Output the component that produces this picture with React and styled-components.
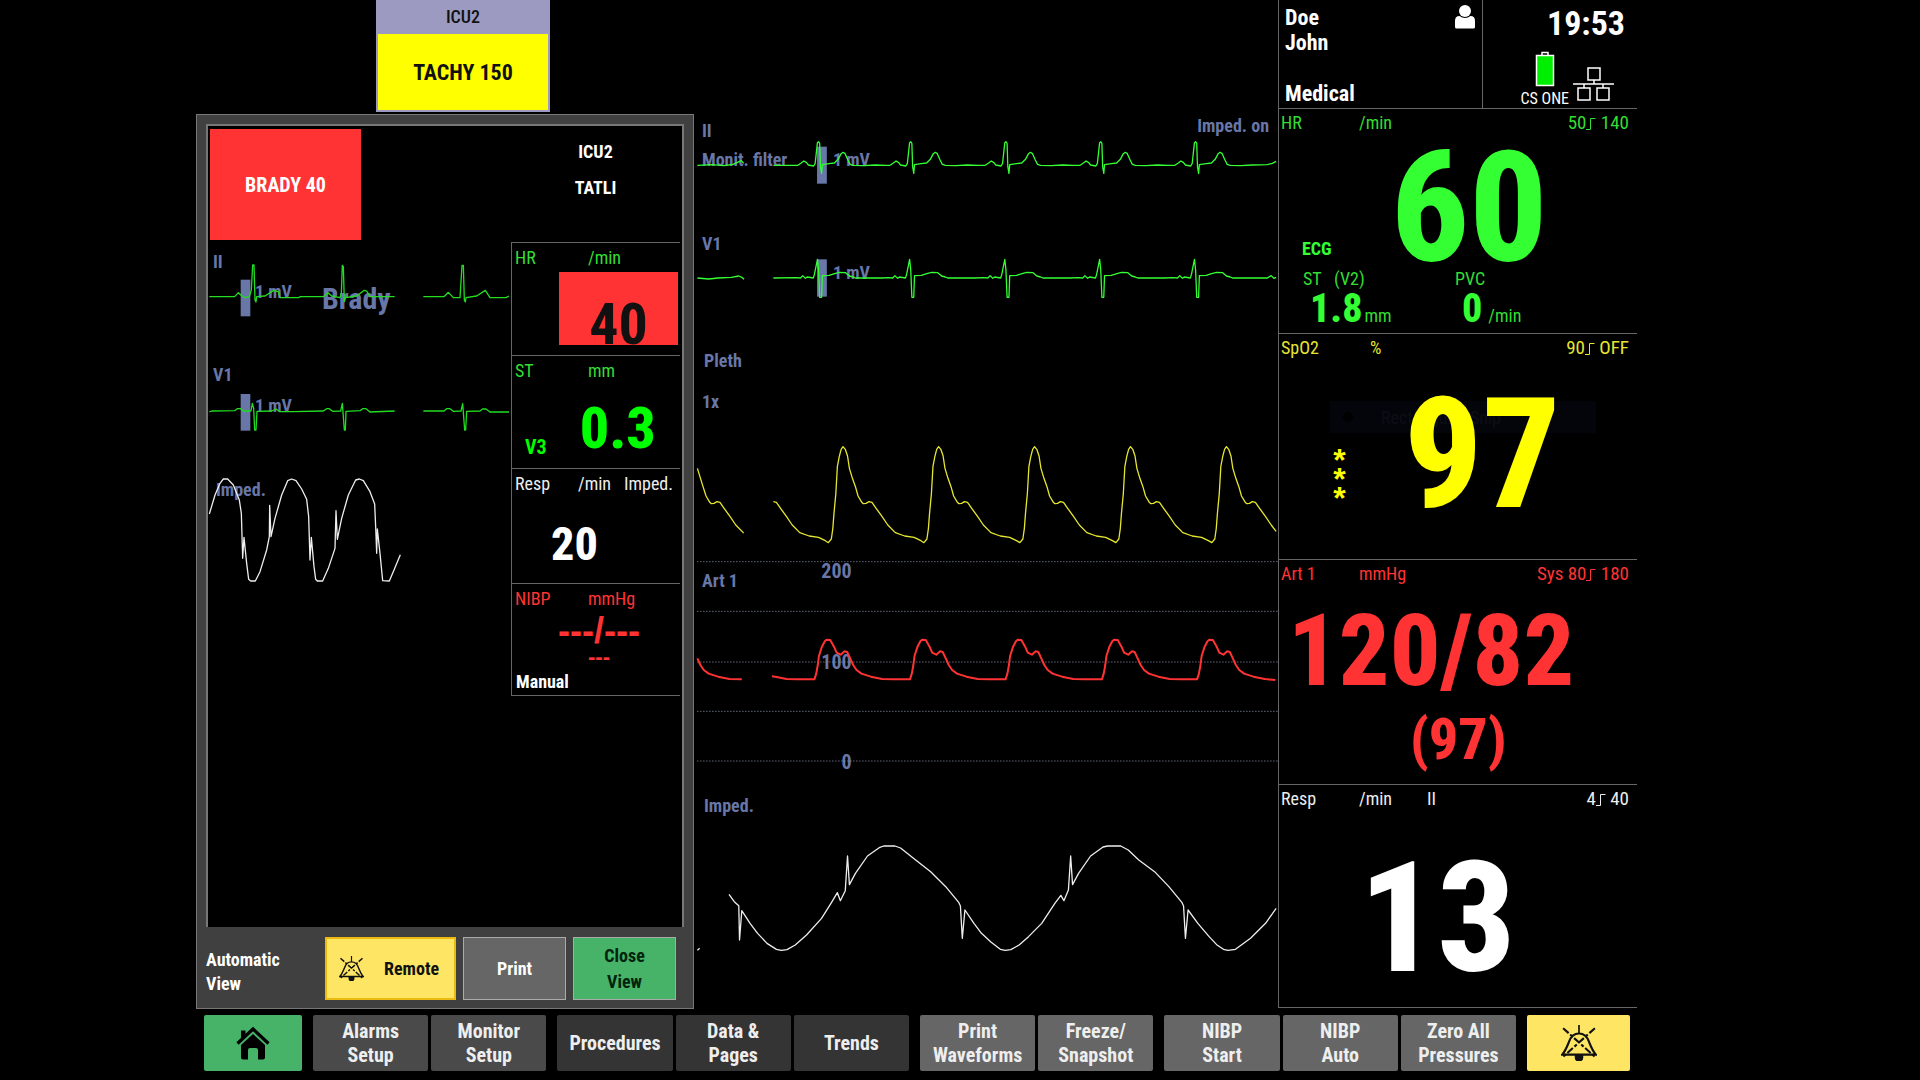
import styled, { createGlobalStyle } from "styled-components";

const narrow = `"Roboto Condensed", Roboto, sans-serif`;
const wide = `"Liberation Sans", sans-serif`;

const green = "#33ff33";
const dimGreen = "#33dd33";
const red = "#ff3333";
const yellow = "#ffff00";
const slate = "#6877a8";

// repeats one beat (offsets from its peak) and keeps what lies between from and to
function repeat(peaks, shape, from, to) {
  return peaks
    .flatMap((peak) => shape.map(([dx, y]) => [peak + dx, y]))
    .filter(([x]) => x >= from && x <= to)
    .join(" ");
}

const ecgBeat = [
  [-55, 196], [-47, 190], [-39, 183], [-32, 188], [-27, 195], [-13, 198], [-9, 190],
  [-3, 128], [0, 125], [3, 130], [5, 200], [8, 220], [10, 194], [28, 191], [42, 189],
  [52, 178], [60, 161], [65, 157], [70, 160], [78, 180], [84, 193], [92, 196], [120, 197], [150, 195], [180, 196],
];
const v1Beat = [
  [-60, 533], [-48, 534], [-42, 527], [-35, 535], [-30, 531], [-14, 534], [-11, 523],
  [-9, 512], [-3, 478], [0, 510], [3, 592], [8, 592], [10, 527], [28, 526], [45, 520],
  [56, 517], [72, 518], [82, 528], [92, 531], [98, 534], [170, 534],
];
const plethBeat = [
  [-39, 608], [-31, 597], [-27, 565], [-24, 520], [-19, 460], [-15, 380], [-10, 350],
  [-5, 328], [0, 320], [6, 328], [12, 348], [17, 385], [25, 415], [33, 440], [40, 468],
  [50, 487], [54, 491], [61, 490], [69, 485], [77, 487], [88, 505], [104, 530],
  [119, 555], [139, 578], [164, 588], [189, 592], [207, 602],
];
const artBeat = [
  [-36, 388], [-31, 370], [-27, 345], [-24, 318], [-16, 290], [-8, 273], [-3, 269],
  [6, 270], [16, 290], [23, 308], [34, 314], [44, 304], [51, 306], [59, 325],
  [67, 345], [76, 360], [89, 371], [114, 380], [144, 387], [175, 388], [210, 388],
];

const tracesII = [
  "20,196 60,194 90,197 115,193 137,182 143,190",
  `222,196 ${repeat([342, 587, 840, 1092, 1344], ecgBeat, 222, 1500)} 1535,194 1548,190 1558,184`,
];
const tracesV1 = [
  "20,534 50,537 75,534 110,532 130,528 138,532 144,538",
  `222,534 ${repeat([342, 587, 840, 1092, 1344], v1Beat, 222, 1515)} 1535,534 1545,527 1552,535 1558,532`,
];
const plethPeaks = [407, 661, 916, 1171, 1426];
const tracesPleth = [
  `20,385 35,440 ${repeat([3], plethBeat, 42, 142)} 142,580`,
  `${repeat([153, ...plethPeaks], plethBeat, 222, 1546)} 1558,574`,
];
const tracesArt = [
  `${repeat([-39], artBeat, 20, 110)} 138,388`,
  `218,379 ${repeat([113, 367, 621, 875, 1131, 1384], artBeat, 220, 1528)} 1556,390`,
];
const tracesImped = [
  "20,511 26,505",
  "104,343 118,365 130,377 132,480 138,392 160,430 180,460 205,490 230,508 243,511 258,509 280,495 310,465 350,415 375,370 392,338 400,362 413,332 419,228 424,314 440,280 472,228 505,202 515,198 545,198 560,204 600,240 640,275 680,320 715,368 719,378 724,475 731,390 755,430 775,460 800,486 825,508 838,511 853,509 875,495 900,470 935,430 970,370 986,346 994,362 1006,330 1012,228 1017,314 1033,280 1065,228 1098,201 1110,198 1145,198 1165,210 1193,240 1235,275 1273,320 1308,368 1312,378 1317,475 1324,390 1350,430 1380,470 1400,494 1418,508 1430,511 1450,508 1490,475 1530,430 1558,385",
];

const remoteII = [
  "58,890 134,890 145,878 156,888 165,893 178,890 184,870 188,795 192,795 195,900 198,906 200,890 225,888 250,872 265,875 270,893 325,893 332,890 400,890 414,878 425,888 450,893 454,880 457,796 460,800 463,905 467,893 500,888 523,871 530,873 540,890 614,890",
  "700,890 762,890 775,877 790,893 810,893 816,796 820,796 823,900 826,906 828,893 860,888 886,871 900,893 948,893 957,888",
];
const remoteV1 = [
  "58,216 65,213 134,212 142,206 152,206 160,213 183,213 187,190 191,205 194,270 198,270 201,214 245,213 258,207 270,215 310,215 400,213 410,206 418,206 428,214 452,213 457,190 463,270 466,270 468,214 510,212 518,206 528,206 540,216 614,213",
  "700,213 762,213 770,206 780,206 790,214 813,213 818,191 824,270 827,270 830,214 870,213 878,207 888,207 900,216 957,216",
];
const remoteImped = [
  "58,522 75,465 90,430 100,417 113,417 130,435 148,480 154,520 158,655 162,592 170,670 176,718 182,723 196,723 210,695 230,630 238,590 239,496 243,590 255,535 275,465 293,422 305,417 318,422 335,447 350,478 356,530 360,660 364,592 372,680 377,718 382,723 398,723 415,685 435,625 438,512 442,598 455,535 475,465 497,420 508,417 520,422 540,455 554,492 557,560 560,640 562,567 570,640 578,722 598,723 612,690 631,644",
];

function Wave({ box, lines, color, weight = 1.3, bar, rules = [] }) {
  return (
    <WaveSvg viewBox={box} preserveAspectRatio="none" aria-hidden="true">
      {bar && <rect x={bar[0]} y={bar[1]} width={bar[2]} height={bar[3]} fill={slate} />}
      {rules.map((y) => (
        <path key={y} d={`M20 ${y}H1562`} stroke="#8f9ab8" strokeWidth="1" strokeDasharray="1 2" />
      ))}
      {lines.map((points) => (
        <polyline key={points} points={points} stroke={color} strokeWidth={weight} />
      ))}
    </WaveSvg>
  );
}

function Step() {
  return (
    <svg width="10" height="14" viewBox="0 0 10 14" fill="none" stroke="currentColor" aria-hidden="true">
      <path d="M0 12.5H4.5V1.5H9.5" />
    </svg>
  );
}

function AlarmOff({ size }) {
  return (
    <svg width={size} height={size} viewBox="0 0 34 34" fill="none" stroke="#111" strokeWidth="2" aria-hidden="true">
      <path d="M17 0V8" strokeWidth="1.6" />
      <path d="M1 28H33C30 25 28.5 21 26.5 16C24.8 11 22 8 17 8S9.200 11 7.500 16C5.500 21 4 25 1 28Z" />
      <path d="M2 3L32 30M32 3L2 30" strokeDasharray="7 2 3 2" />
      <path d="M13 28H21V31A4 3.5 0 0 1 13 31Z" fill="#111" stroke="none" />
    </svg>
  );
}

function Home() {
  return (
    <svg width="34" height="34" viewBox="0 0 34 34" aria-hidden="true">
      <path d="M1.5 17.5L17 3L32.5 17.5" fill="none" stroke="#000" strokeWidth="3.2" />
      <path d="M5 4.5H9.5V9L5 13Z" />
      <path d="M17 8L29 19V31.5Q29 33.5 27 33.5H22V24Q22 22 20 22H14Q12 22 12 24V33.5H7Q5 33.5 5 31.5V19Z" />
    </svg>
  );
}

function Person() {
  return (
    <svg width="20" height="24" viewBox="0 0 20 24" fill="#fff" aria-hidden="true">
      <circle cx="10" cy="6" r="6" />
      <path d="M0 22V16Q0 11 4.5 11Q10 15 15.5 11Q20 11 20 16V22Q20 23.5 18.5 23.5H1.5Q0 23.5 0 22Z" />
    </svg>
  );
}

function Battery() {
  return (
    <svg width="20" height="36" viewBox="0 0 20 36" fill="none" stroke="#fff" aria-hidden="true">
      <path d="M7 4V1.5H13V4" strokeWidth="1.5" />
      <rect x="1.5" y="4.5" width="17" height="30" fill="#00ee00" strokeWidth="1.5" />
    </svg>
  );
}

function Network() {
  return (
    <svg width="42" height="34" viewBox="0 0 42 34" fill="none" stroke="#fff" strokeWidth="1.5" aria-hidden="true">
      <path d="M15 1H27V13H15ZM5 21H17V33H5ZM24 21H36V33H24ZM21 13V17M0 17H41M11 17V21M30 17V21" />
    </svg>
  );
}

function LimitHead({ name, unit, extra, low, high, color, inset }) {
  return (
    <ParamHead $color={color}>
      <span>{name}</span>
      <Unit $inset={inset}>{unit}</Unit>
      <span>{extra}</span>
      <Limits>
        {low}
        <Step /> {high}
      </Limits>
    </ParamHead>
  );
}

export default function App() {
  return (
    <>
      <GlobalStyle />
      <Page>
        <Main>
          <RemoteColumn>
            <BedTab>
              <BedName>ICU2</BedName>
              <BedAlarm>TACHY 150</BedAlarm>
            </BedTab>
            <Panel>
              <Screen>
                <ScreenHead>
                  <Brady>BRADY 40</Brady>
                  <Bed>
                    <span>ICU2</span>
                    <span>TATLI</span>
                  </Bed>
                </ScreenHead>
                <ScreenBody>
                  <RemoteWaves>
                    <Channel>
                      <Tag $x={5} $y={20}>II</Tag>
                      <Tag $x={47} $y={50}>1 mV</Tag>
                      <Tag $x={114} $y={57} $size={30}>Brady</Tag>
                      <Wave box="54 726 909 339" bar={[152, 839, 29, 110]} lines={remoteII} color="#22dd22" />
                    </Channel>
                    <Channel>
                      <Tag $x={5} $y={20}>V1</Tag>
                      <Tag $x={47} $y={51}>1 mV</Tag>
                      <Wave box="54 45 909 339" bar={[152, 162, 29, 110]} lines={remoteV1} color="#22dd22" />
                    </Channel>
                    <Channel>
                      <Tag $x={8} $y={22}>Imped.</Tag>
                      <Wave box="54 384 909 345" lines={remoteImped} color="#eee" />
                    </Channel>
                  </RemoteWaves>
                  <Vitals>
                    <Vital>
                      <VitalHead $color={dimGreen}>
                        <span>HR</span>
                        <span>/min</span>
                      </VitalHead>
                      <RedBox>40</RedBox>
                    </Vital>
                    <Vital>
                      <VitalHead $color={dimGreen}>
                        <span>ST</span>
                        <span>mm</span>
                      </VitalHead>
                      <StRow>
                        <Lead>V3</Lead>
                        <Value $size={58}>0.3</Value>
                      </StRow>
                    </Vital>
                    <Vital>
                      <VitalHead $color="#eee" $unitAt={63}>
                        <span>Resp</span>
                        <span>/min</span>
                        <span>Imped.</span>
                      </VitalHead>
                      <RespValue $size={46}>20</RespValue>
                    </Vital>
                    <Vital>
                      <VitalHead $color={red}>
                        <span>NIBP</span>
                        <span>mmHg</span>
                      </VitalHead>
                      <Pressure>
                        <Dashes $size={36}>---/---</Dashes>
                        <Dashes $size={22}>---</Dashes>
                      </Pressure>
                      <Manual>Manual</Manual>
                    </Vital>
                  </Vitals>
                </ScreenBody>
              </Screen>
              <PanelFoot>
                <ViewName>
                  Automatic
                  <br />
                  View
                </ViewName>
                <RemoteButton type="button">
                  <AlarmOff size={25} />
                  Remote
                </RemoteButton>
                <PanelButton type="button">Print</PanelButton>
                <CloseButton type="button">
                  Close
                  <br />
                  View
                </CloseButton>
              </PanelFoot>
            </Panel>
          </RemoteColumn>

          <Waves>
            <Channel>
              <Tag $x={8} $y={19}>II</Tag>
              <Tag $x={8} $y={48}>Monit. filter</Tag>
              <Tag $x={139} $y={48}>1 mV</Tag>
              <RightTag>Imped. on</RightTag>
              <Wave box="11 36 1552 339" bar={[338, 140, 26, 111]} lines={tracesII} color={green} />
            </Channel>
            <Channel>
              <Tag $x={8} $y={19}>V1</Tag>
              <Tag $x={139} $y={48}>1 mV</Tag>
              <Wave box="11 375 1552 339" bar={[338, 478, 26, 112]} lines={tracesV1} color={green} />
            </Channel>
            <Channel>
              <Tag $x={10} $y={23}>Pleth</Tag>
              <Tag $x={8} $y={64}>1x</Tag>
              <Wave box="11 -6 1552 663" lines={tracesPleth} color="#e6e632" />
            </Channel>
            <Channel>
              <Tag $x={8} $y={22}>Art 1</Tag>
              <Scale $y={12}>200</Scale>
              <Scale $y={103}>100</Scale>
              <Scale $y={203}>0</Scale>
              <Wave
                box="11 27 1552 675"
                rules={[35, 184, 336, 484, 633]}
                lines={tracesArt}
                color={red}
                weight={2}
              />
            </Channel>
            <Channel>
              <Tag $x={10} $y={22}>Imped.</Tag>
              <Wave box="11 12 1552 669" lines={tracesImped} color="#eee" />
            </Channel>
          </Waves>

          <Params>
            <Patient>
              <PatientInfo>
                <div>
                  Doe
                  <br />
                  John
                </div>
                <Person />
                <div>Medical</div>
              </PatientInfo>
              <Status>
                <Clock>19:53</Clock>
                <Devices>
                  <Power>
                    <Battery />
                    CS ONE
                  </Power>
                  <Network />
                </Devices>
              </Status>
            </Patient>

            <Param>
              <LimitHead name="HR" unit="/min" low="50" high="140" color={dimGreen} />
              <HrRow>
                <Ecg>ECG</Ecg>
                <Huge $color={green}>60</Huge>
              </HrRow>
              <SubGrid>
                <SubName>ST&nbsp;&nbsp; (V2)</SubName>
                <SubName>PVC</SubName>
                <SubValue>
                  <b>1.8</b> mm
                </SubValue>
                <SubValue $gap={6}>
                  <b>0</b> /min
                </SubValue>
              </SubGrid>
            </Param>

            <Param>
              <Ghost aria-hidden="true">
                <i />
                Rectangular Snip
              </Ghost>
              <LimitHead name="SpO2" unit="%" low="90" high="OFF" color="#e6e632" inset={11} />
              <SpRow>
                <Stars>
                  <span>*</span>
                  <span>*</span>
                  <span>*</span>
                </Stars>
                <Huge $color={yellow}>97</Huge>
              </SpRow>
            </Param>

            <Param>
              <LimitHead name="Art 1" unit="mmHg" low="Sys 80" high="180" color={red} />
              <Art>120/82</Art>
              <Mean>(97)</Mean>
            </Param>

            <Param>
              <LimitHead name="Resp" unit="/min" extra="II" low="4" high="40" color="#eee" />
              <RespRow>
                <Huge $color="#fff">13</Huge>
              </RespRow>
            </Param>
          </Params>
        </Main>

        <Toolbar>
          <HomeButton type="button" aria-label="Home">
            <Home />
          </HomeButton>
          <Group $count={2}>
            <Tool type="button" $tone="#4a4a4a">Alarms<br />Setup</Tool>
            <Tool type="button" $tone="#4a4a4a">Monitor<br />Setup</Tool>
          </Group>
          <Group $count={3}>
            <Tool type="button" $tone="#343434">Procedures</Tool>
            <Tool type="button" $tone="#343434">Data &amp;<br />Pages</Tool>
            <Tool type="button" $tone="#343434">Trends</Tool>
          </Group>
          <Group $count={2}>
            <Tool type="button">Print<br />Waveforms</Tool>
            <Tool type="button">Freeze/<br />Snapshot</Tool>
          </Group>
          <Group $count={3}>
            <Tool type="button">NIBP<br />Start</Tool>
            <Tool type="button">NIBP<br />Auto</Tool>
            <Tool type="button">Zero All<br />Pressures</Tool>
          </Group>
          <SilenceButton type="button" aria-label="Alarm silence">
            <AlarmOff size={36} />
          </SilenceButton>
        </Toolbar>
      </Page>
    </>
  );
}

const GlobalStyle = createGlobalStyle`
  * {
    box-sizing: border-box;
  }

  body {
    margin: 0;
    background: #000;
    color: #fff;
    font-family: ${narrow};
    font-size: 18px;
  }

  button {
    font: inherit;
    cursor: pointer;
  }
`;

const Page = styled.div`
  min-height: 100vh;
  display: flex;
  flex-direction: column;
  gap: 6px;
  padding: 0 283px 9px 196px;
`;

const Main = styled.main`
  flex: 1;
  display: grid;
  grid-template-columns: 498fr 584fr 359fr;
`;

const RemoteColumn = styled.section`
  display: flex;
  flex-direction: column;
  gap: 2px;
`;

const BedTab = styled.div`
  width: 174px;
  margin-left: 180px;
  padding: 0 2px 2px;
  background: #9c9ac0;
  color: #111;
  text-align: center;
`;

const BedName = styled.div`
  font-weight: 500;
  line-height: 34px;
`;

const BedAlarm = styled.div`
  padding-top: 2px;
  background: ${yellow};
  font-size: 22px;
  font-weight: 700;
  line-height: 74px;
`;

const Panel = styled.div`
  flex: 1;
  display: flex;
  flex-direction: column;
  padding: 9px 9px 8px;
  background: #404040;
  border: 1px solid #777;
`;

const Screen = styled.div`
  flex: 1;
  background: #000;
  border: 2px solid #777;
  border-bottom: 0;
`;

const ScreenHead = styled.div`
  display: grid;
  grid-template-columns: 1fr 169px;
  padding: 3px 2px 2px;
  font-weight: 700;
`;

const Brady = styled.div`
  width: 151px;
  padding-top: 2px;
  background: ${red};
  font-size: 20px;
  line-height: 109px;
  text-align: center;
`;

const Bed = styled.div`
  display: flex;
  flex-direction: column;
  align-items: center;
  padding-top: 5px;
  line-height: 36px;
`;

const ScreenBody = styled.div`
  display: grid;
  grid-template-columns: 1fr 169px;
  padding-right: 2px;
`;

const RemoteWaves = styled.div`
  display: grid;
  grid-template-rows: 113px 113px 115px;
`;

const Channel = styled.div`
  position: relative;
`;

const WaveSvg = styled.svg`
  position: absolute;
  inset: 0;
  width: 100%;
  height: 100%;
  fill: none;

  polyline,
  path {
    vector-effect: non-scaling-stroke;
    stroke-linejoin: round;
  }
`;

/* label under a trace, centred on y */
const Tag = styled.span`
  position: absolute;
  left: ${({ $x }) => $x}px;
  top: ${({ $y }) => $y - 10}px;
  color: ${slate};
  font-size: ${({ $size }) => $size || 18}px;
  font-weight: 700;
  line-height: 20px;
  white-space: nowrap;
`;

const RightTag = styled(Tag)`
  left: auto;
  right: 9px;
  top: 4px;
`;

const Scale = styled(Tag)`
  left: auto;
  right: 73%;
  font-size: 20px;
`;

const Vitals = styled.div`
  display: grid;
  grid-template-rows: 113px 113px 115px 112px;
  border-left: 1px solid #666;
  border-bottom: 1px solid #666;
`;

const Vital = styled.div`
  border-top: 1px solid #666;
`;

const VitalHead = styled.div`
  display: grid;
  grid-template-columns: ${({ $unitAt }) => $unitAt || 73}px auto 1fr;
  padding: 0 7px 0 3px;
  color: ${({ $color }) => $color};
  line-height: 29px;

  span:nth-child(3) {
    text-align: right;
  }
`;

const Value = styled.div`
  font-size: ${({ $size }) => $size}px;
  font-weight: 800;
  line-height: 56px;
`;

const RedBox = styled.div`
  height: 73px;
  margin: 0 2px 0 47px;
  padding-top: 24px;
  background: ${red};
  color: #111;
  font-size: 58px;
  font-weight: 700;
  line-height: 56px;
  text-align: center;
`;

const StRow = styled.div`
  display: flex;
  align-items: flex-end;
  gap: 33px;
  padding: 15px 0 0 13px;
  color: #00ff00;
`;

const Lead = styled.div`
  font-size: 20px;
  font-weight: 700;
  line-height: 18px;
`;

const RespValue = styled(Value)`
  padding: 18px 0 0 39px;
`;

const Pressure = styled.div`
  display: flex;
  flex-direction: column;
  align-items: center;
  gap: 2px;
  padding: 6px 0 0 6px;
  color: ${red};
`;

const Dashes = styled.div`
  font-family: ${wide};
  font-size: ${({ $size }) => $size}px;
  font-weight: 700;
  line-height: 24px;
`;

const Manual = styled.div`
  padding: 3px 0 0 4px;
  font-weight: 700;
  line-height: 20px;
`;

const PanelFoot = styled.div`
  display: grid;
  grid-template-columns: 112fr 131fr 103fr 103fr;
  grid-auto-rows: 63px;
  gap: 7px;
  padding: 10px 8px 0 0;
  font-weight: 700;
`;

const ViewName = styled.div`
  padding-top: 11px;
  line-height: 24px;
`;

const PanelButton = styled.button`
  padding: 0;
  background: #666;
  border: 1px solid #aaa;
  color: #fff;
  line-height: 26px;
`;

const CloseButton = styled(PanelButton)`
  background: #47b369;
  color: #02230d;
`;

const RemoteButton = styled(PanelButton)`
  display: flex;
  align-items: center;
  gap: 20px;
  padding-left: 12px;
  background: #fee664;
  border: 2px solid #ecb90f;
  color: #111;
`;

const Waves = styled.section`
  display: grid;
  grid-template-rows: 113fr 113fr 221fr 225fr 223fr;
  padding: 112px 0 2px;
`;

const Params = styled.section`
  display: grid;
  grid-template-rows: 108px 225fr 225fr 225fr 223fr;
  margin-bottom: 1px;
  border-left: 1px solid #666;
  border-bottom: 1px solid #666;
`;

const Patient = styled.header`
  display: grid;
  grid-template-columns: 205fr 154fr;
`;

const PatientInfo = styled.div`
  display: grid;
  grid-template-columns: 1fr auto;
  align-content: space-between;
  padding: 5px 7px 3px 6px;
  border-right: 1px solid #666;
  font-size: 22px;
  font-weight: 700;
  line-height: 25px;
`;

const Status = styled.div`
  display: flex;
  flex-direction: column;
  padding-right: 12px;
`;

const Clock = styled.div`
  font-size: 34px;
  font-weight: 700;
  line-height: 47px;
  text-align: right;
`;

const Devices = styled.div`
  display: flex;
  justify-content: flex-end;
  align-items: flex-end;
  gap: 4px;
  padding: 4px 10px 0 0;

  > svg {
    margin-bottom: 8px;
  }
`;

const Power = styled.div`
  display: flex;
  flex-direction: column;
  align-items: center;
  gap: 2px;
  font-size: 16px;
  line-height: 20px;
  white-space: nowrap;
`;

const Param = styled.section`
  position: relative;
  display: flex;
  flex-direction: column;
  border-top: 1px solid #666;
`;

const ParamHead = styled.div`
  display: grid;
  grid-template-columns: 78px 68px 1fr auto;
  padding: 0 8px 0 2px;
  color: ${({ $color }) => $color};
  line-height: 28px;
`;

const Unit = styled.span`
  padding-left: ${({ $inset }) => $inset || 0}px;
`;

const Limits = styled.span`
  font-size: 19px;
  white-space: pre;

  svg {
    vertical-align: -2px;
  }
`;

const Huge = styled.div`
  color: ${({ $color }) => $color};
  font-size: 154px;
  font-weight: 800;
  line-height: 122px;
`;

const HrRow = styled.div`
  display: grid;
  grid-template-columns: 112px auto;
  align-items: end;
  padding-top: 11px;
`;

const Ecg = styled.div`
  padding: 0 0 11px 23px;
  color: ${green};
  font-weight: 700;
  line-height: 20px;
`;

const SubGrid = styled.div`
  display: grid;
  grid-template-columns: 152px 1fr;
  padding-left: 24px;
  color: ${dimGreen};
`;

const SubName = styled.div`
  line-height: 18px;
`;

const SubValue = styled.div`
  display: flex;
  align-items: baseline;
  gap: ${({ $gap }) => $gap || 2}px;
  padding-left: 7px;
  line-height: 20px;

  b {
    color: ${green};
    font-size: 40px;
    font-weight: 800;
    line-height: 42px;
  }
`;

const SpRow = styled.div`
  display: grid;
  grid-template-columns: 125px auto;
  align-items: center;
  padding-top: 32px;
`;

const Stars = styled.div`
  display: flex;
  flex-direction: column;
  align-items: center;
  padding: 48px 4px 0 0;
  color: ${yellow};
  font-family: ${wide};
  font-size: 32px;
  font-weight: 700;
  line-height: 19px;
`;

/* barely visible leftover behind the reading */
const Ghost = styled.div`
  position: absolute;
  z-index: -1;
  top: 67px;
  left: 51px;
  display: flex;
  align-items: center;
  gap: 28px;
  width: 266px;
  height: 32px;
  padding-left: 13px;
  background: #04050b;
  color: #0c0e16;

  i {
    width: 10px;
    height: 10px;
    border-radius: 50%;
    background: #000;
  }
`;

const Art = styled.div`
  padding: 20px 0 0 9px;
  color: ${red};
  font-size: 100px;
  font-weight: 800;
  line-height: 86px;
`;

const Mean = styled.div`
  padding: 13px 0 0 131px;
  color: ${red};
  font-size: 58px;
  font-weight: 800;
  line-height: 64px;
`;

const RespRow = styled.div`
  padding: 45px 0 0 80px;
`;

const Toolbar = styled.nav`
  display: flex;
  gap: 11px;
  padding: 0 7px 0 8px;
  font-size: 20px;
  font-weight: 700;
`;

const Group = styled.div`
  flex: ${({ $count }) => `${$count} 1 ${($count - 1) * 3}px`};
  display: flex;
  gap: 3px;
`;

const Tool = styled.button`
  flex: 1 1 0;
  min-height: 56px;
  padding: 0;
  background: ${({ $tone }) => $tone || "#666"};
  border: 0;
  border-radius: 2px;
  color: #eee;
  line-height: 24px;
`;

const HomeButton = styled(Tool)`
  flex: 0 0 98px;
  display: grid;
  place-items: center;
  background: #47b369;
`;

const SilenceButton = styled(HomeButton)`
  flex-basis: 103px;
  background: #fee664;
`;
